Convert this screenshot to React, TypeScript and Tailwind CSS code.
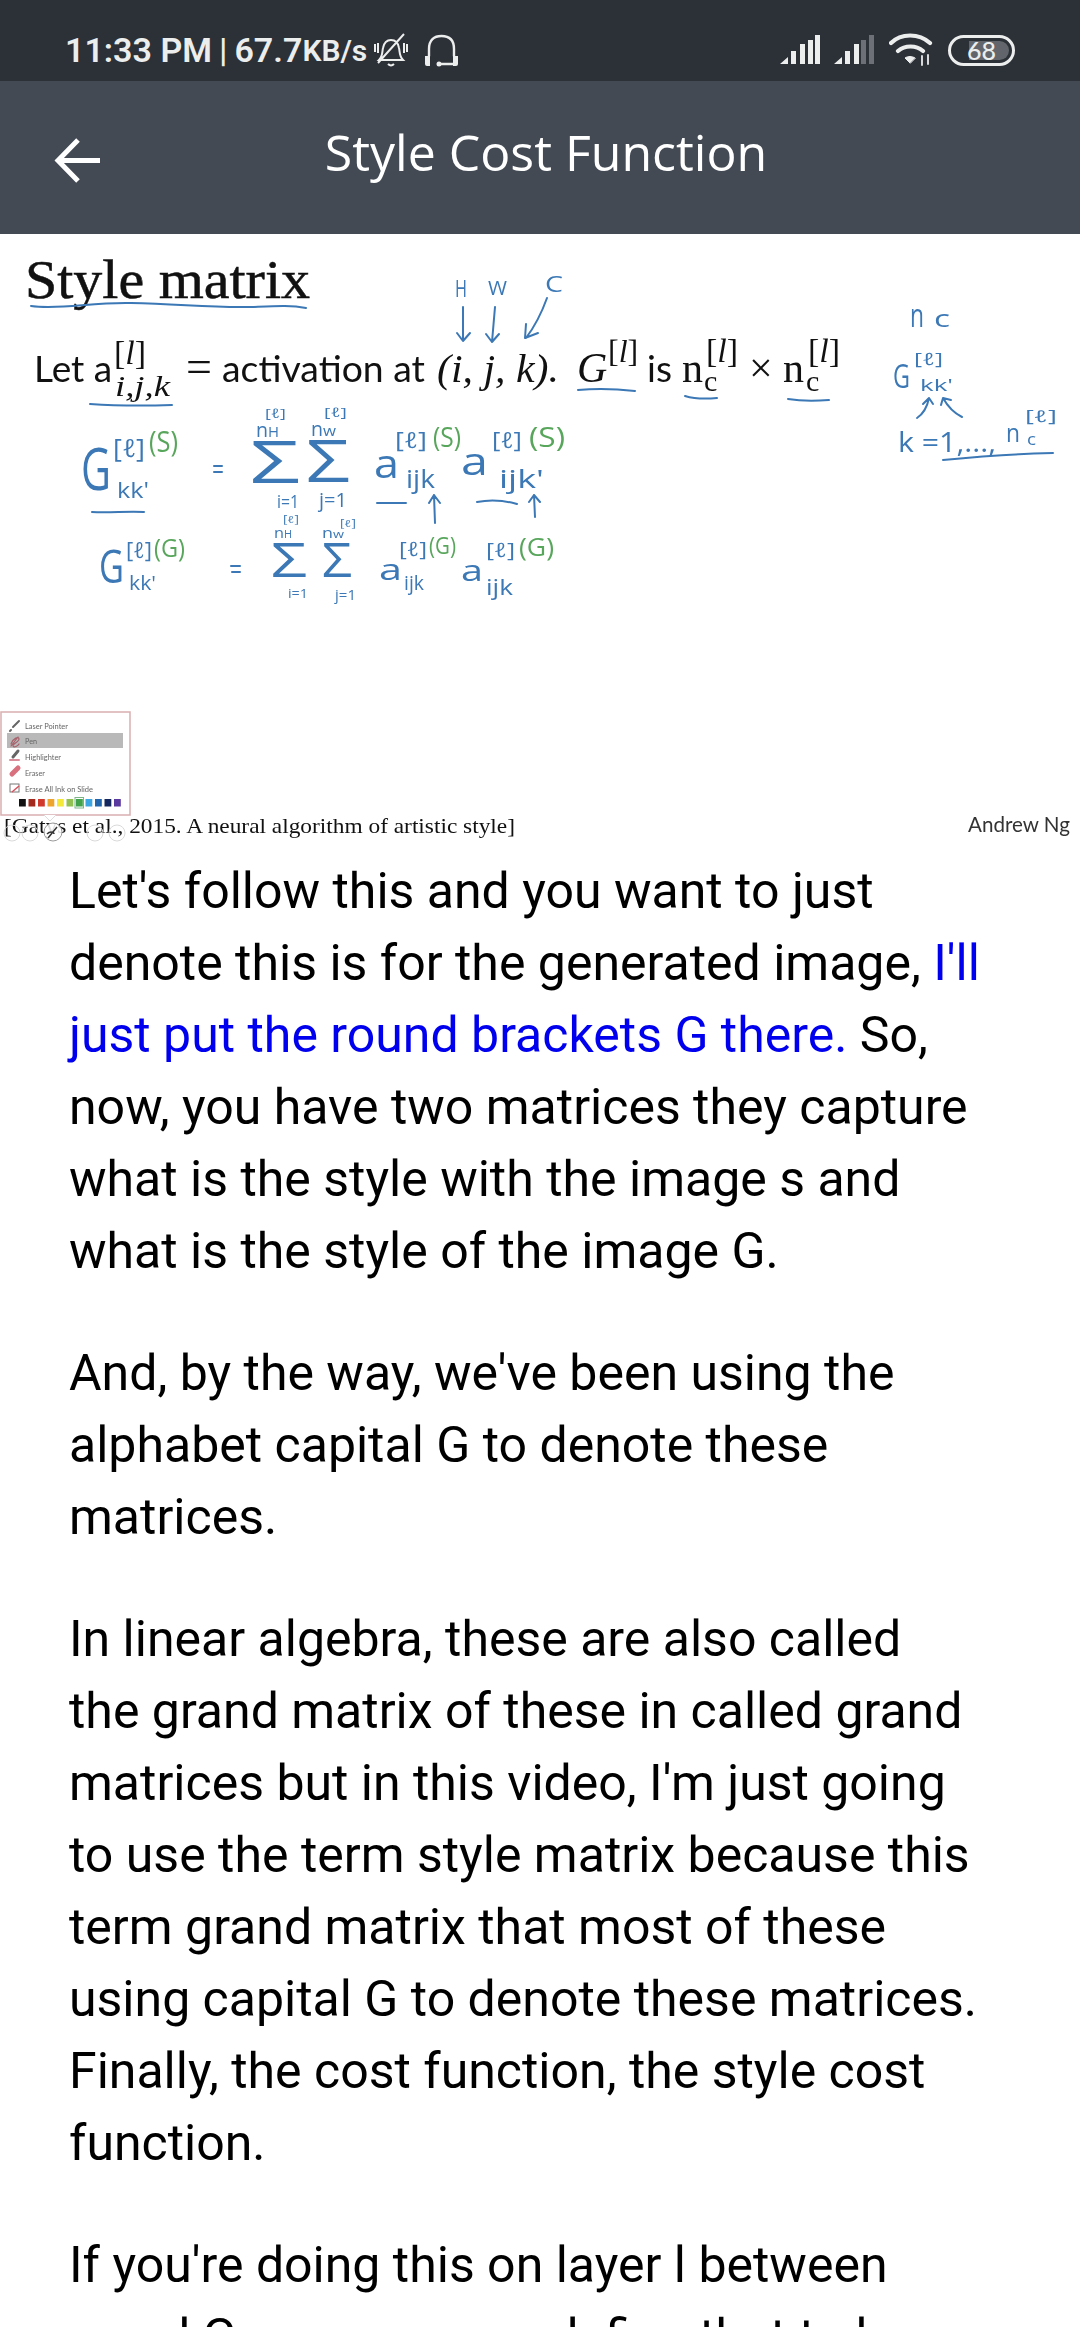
const INK = "#3b78b5";
const GREEN = "#58a65c";
const MATH = '"Liberation Serif", "DejaVu Serif", serif';
const SANS = 'Lato, "Open Sans", sans-serif';
const HAND = '"Open Sans", "DejaVu Sans", sans-serif';

// x, baseline, label, font size, width on the slide, colour
const notes: [number, number, string, number, number, string?][] = [
  [455, 297, "H", 23, 12],
  [488, 295, "W", 20, 19],
  [545, 292, "C", 21, 18],
  // first row
  [81, 490, "G", 58, 30],
  [113, 457, "[ℓ]", 25, 32],
  [149, 452, "(S)", 29, 29, GREEN],
  [117, 498, "kk'", 22, 32],
  [256, 437, "n", 20, 12],
  [268, 437, "H", 14, 11],
  [265, 418, "[ℓ]", 13, 21],
  [250, 483, "Σ", 58, 50],
  [311, 436, "n", 20, 12],
  [323, 436, "w", 15, 13],
  [324, 417, "[ℓ]", 13, 23],
  [306, 482, "Σ", 58, 44],
  [374, 478, "a", 40, 25],
  [395, 448, "[ℓ]", 22, 32],
  [433, 447, "(S)", 27, 28, GREEN],
  [406, 488, "ijk", 26, 29],
  [461, 475, "a", 38, 27],
  [492, 448, "[ℓ]", 22, 30],
  [529, 447, "(S)", 28, 36, GREEN],
  [499, 488, "ijk'", 26, 45],
  [277, 508, "i=1", 18, 22],
  [319, 507, "j=1", 20, 28],
  // second row
  [99, 583, "G", 45, 25],
  [126, 558, "[ℓ]", 22, 26],
  [154, 557, "(G)", 25, 31, GREEN],
  [129, 590, "kk'", 20, 27],
  [274, 538, "n", 15, 10],
  [284, 538, "H", 10, 8],
  [283, 523, "[ℓ]", 10, 16],
  [271, 577, "Σ", 48, 36],
  [322, 538, "n", 15, 11],
  [333, 538, "w", 11, 11],
  [340, 527, "[ℓ]", 10, 16],
  [322, 577, "Σ", 48, 30],
  [288, 598, "i=1", 13, 20],
  [335, 600, "j=1", 15, 21],
  [379, 580, "a", 29, 23],
  [404, 590, "ijk", 20, 20],
  [399, 556, "[ℓ]", 20, 28],
  [429, 554, "(G)", 23, 27, GREEN],
  [461, 581, "a", 30, 22],
  [486, 595, "ijk", 22, 27],
  [486, 557, "[ℓ]", 20, 29],
  [519, 556, "(G)", 25, 35, GREEN],
  // right column
  [910, 327, "n", 32, 14],
  [934, 327, "c", 24, 16],
  [893, 388, "G", 32, 17],
  [914, 365, "[ℓ]", 17, 29],
  [920, 391, "kk'", 17, 33],
  [898, 452, "k =1,...,", 27, 98],
  [1006, 442, "n", 26, 14],
  [1027, 445, "c", 17, 9],
  [1025, 422, "[ℓ]", 16, 32],
];

const strokes = [
  "M31 306c30 4 60-4 100-3 50 1 80 5 120 4 25-1 40-2 55 1",
  "M90 404c30 2 50 2 82 1",
  "M578 390c20-2 40-1 57 1",
  "M685 396c10 3 22 3 32 2",
  "M788 399c12 2 28 2 41 1",
  "M943 460c30-3 60-6 110-7",
  "M463 307v33M457 333l6 8 7-8",
  "M495 307l-3 35M486 334l6 8 7-8",
  "M547 298c-5 14-12 28-21 40M526 324l-1 14 13-5",
  "M92 512c18 1 35-1 52 0",
  "M377 503h29M477 502c14-3 26-2 40 2",
  "M435 523l-1-28M429 503l5-8 6 8M535 517l-1-22M529 502l5-7 6 7",
  "M214 466h8M214 472h8M231 566h9M232 572h8",
  "M917 418c6-4 10-10 12-20M923 404l6-6 4 6M962 417c-8-4-14-10-19-19M941 405l2-7 8 2",
];

const swatches = ["#ffffff", "#111111", "#a32a1d", "#d0392b", "#eea530", "#f4e838", "#93c052", "#42a24c", "#3ca6e2", "#2265ad", "#14285f", "#5a3a9e"];
const toolRows: [number, string, number][] = [
  [726, "Laser Pointer", 43],
  [741, "Pen", 12],
  [757, "Highlighter", 36],
  [773, "Eraser", 20],
  [789, "Erase All Ink on Slide", 68],
];

function StatusIcons() {
  return (
    <div className="flex items-center">
      <svg width="40" height="30" viewBox="0 0 40 30" className="mr-[14px]" fill="#eceded">
        <path d="M0 29l8-7v7zM11 16h5v13h-5zM20 9h5v20h-5zM28 5h5v24h-5zM35 0h5v29h-5z" />
      </svg>
      <svg width="40" height="30" viewBox="0 0 40 30" className="mr-[15px]">
        <path d="M0 29l8-7v7zM11 16h5v13h-5zM20 9h5v20h-5z" fill="#eceded" />
        <path d="M27 5h5v24h-5zM35 0h5v29h-5z" fill="#6d7076" />
      </svg>
      <svg width="46" height="34" viewBox="0 0 46 34" fill="none" stroke="#eceded" strokeWidth="4.2" strokeLinecap="round" className="mr-[13px]">
        <path d="M2 10C12 0 30 0 41 10M9 18c7-6 18-6 25 0" />
        <path d="M21 30l-5-5c3-2 7-2 10 0z" fill="#eceded" strokeWidth="1" />
        <path d="M33 23v9M39 22v9" strokeWidth="1.8" />
      </svg>
      <div className="relative flex h-[31px] w-[67px] items-center justify-center rounded-full border-[3px] border-[#eceded]">
        <div className="absolute top-[3px] right-[3px] bottom-[3px] left-[18px] rounded-r-full bg-[#62666c]" />
        <span className="relative text-[25px] leading-none font-medium text-[#eceded] [font-family:Lato,sans-serif]">68</span>
      </div>
    </div>
  );
}

function PenMenu() {
  return (
    <g>
      <rect x="1" y="712" width="129" height="103" fill="#fff" stroke="#d9aeb0" strokeWidth="1.5" />
      <path d="M44 815l6 6 6-6" fill="#fff" stroke="#ddd" />
      <rect x="7" y="733" width="116" height="15" fill="#b9b9b9" />
      {toolRows.map(([y, label, width]) => (
        <text key={label} x="25" y={y + 3} fontFamily={SANS} fontSize="7.5" fill="#666" textLength={width} lengthAdjust="spacingAndGlyphs">
          {label}
        </text>
      ))}
      <g fill="none" strokeLinecap="round">
        <path d="M13 727l6-6M10 731l1-1" stroke="#666" strokeWidth="2" />
        <path d="M11 744c2-6 8-8 8-5s-7 5-6 7 5 0 6-2M11 746l7-9" stroke="#a8606a" strokeWidth="1.2" />
        <path d="M13 757l5-6" stroke="#666" strokeWidth="3" />
        <path d="M10 760h9" stroke="#d98c9a" strokeWidth="2" />
        <path d="M12 774l6-6" stroke="#d8707e" strokeWidth="5" />
      </g>
      <rect x="10" y="784" width="9" height="8" fill="#fff" stroke="#777" />
      <path d="M12 792l7-6" stroke="#d8505e" strokeWidth="1.5" />
      {swatches.map((c, i) => (
        <rect key={c} x={9.5 + i * 9.5} y="799" width="6.8" height="7.5" fill={c} />
      ))}
      <rect x="75" y="797.5" width="8.5" height="10.5" fill="none" stroke="#7fb487" />
    </g>
  );
}

function Slide() {
  return (
    <svg width="1080" height="610" viewBox="0 234 1080 610" className="block blur-[0.4px]">
      <g fill="#111">
        <text x="25" y="298" fontFamily={MATH} fontSize="54" stroke="#111" strokeWidth="0.5" textLength="285" lengthAdjust="spacingAndGlyphs">Style matrix</text>
        <g fontFamily={SANS} fontSize="37">
          <text x="34" y="382">Let a</text>
          <text x="222" y="382" textLength="203" lengthAdjust="spacingAndGlyphs">activation at</text>
          <text x="647" y="382">is</text>
        </g>
        <g fontFamily={MATH}>
          <text x="186" y="382" fontSize="46">=</text>
          <text x="114" y="364" fontSize="34">[<tspan fontStyle="italic">l</tspan>]</text>
          <text x="115" y="396" fontSize="30" fontStyle="italic" textLength="55" lengthAdjust="spacingAndGlyphs">i,j,k</text>
          <text x="437" y="382" fontSize="40" fontStyle="italic" textLength="122" lengthAdjust="spacingAndGlyphs">(i, j, k).</text>
          <text x="577" y="382" fontSize="42" fontStyle="italic">G</text>
          <text x="608" y="362" fontSize="32">[<tspan fontStyle="italic">l</tspan>]</text>
          <text x="682" y="382" fontSize="42">n</text>
          <text x="704" y="391" fontSize="30">c</text>
          <text x="706" y="362" fontSize="34">[<tspan fontStyle="italic">l</tspan>]</text>
          <text x="749" y="382" fontSize="42">×</text>
          <text x="783" y="382" fontSize="42">n</text>
          <text x="806" y="391" fontSize="30">c</text>
          <text x="808" y="362" fontSize="34">[<tspan fontStyle="italic">l</tspan>]</text>
        </g>
        <text x="4" y="833" fontFamily={MATH} fontSize="21" textLength="511" lengthAdjust="spacingAndGlyphs">[Gatys et al., 2015. A neural algorithm of artistic style]</text>
        <text x="968" y="832" fontFamily={SANS} fontSize="21" fill="#333" textLength="102" lengthAdjust="spacingAndGlyphs">Andrew Ng</text>
      </g>

      <g fontFamily={HAND}>
        {notes.map(([x, y, label, size, width, color], i) => (
          <text key={i} x={x} y={y} fontSize={size} fill={color ?? INK} textLength={width} lengthAdjust="spacingAndGlyphs">
            {label}
          </text>
        ))}
      </g>
      <g fill="none" stroke={INK} strokeWidth="2" strokeLinecap="round" strokeLinejoin="round">
        {strokes.map((d, i) => (
          <path key={i} d={d} />
        ))}
      </g>

      <PenMenu />
      <g fill="none" stroke="#d9d9d9" strokeWidth="1">
        <circle cx="12" cy="833" r="8" />
        <circle cx="30" cy="833" r="8" />
        <circle cx="95" cy="833" r="8" />
        <circle cx="117" cy="833" r="8" />
      </g>
      <circle cx="53" cy="832" r="9" fill="#fff" fillOpacity="0.85" stroke="#999" />
      <path d="M48 838l9-11M47 834c3-3 7-2 7 0" fill="none" stroke="#333" strokeWidth="1.5" />
    </svg>
  );
}

export default function App() {
  return (
    <div className="h-[2340px] w-[1080px] overflow-hidden bg-white [font-family:Roboto,sans-serif]">
      <div className="flex h-[81px] items-center justify-between bg-[#2c3037] px-[65px] pt-[19px]">
        <div className="flex items-center text-[34px] font-semibold text-[#eceded]">
          <span>11:33 PM</span>
          <span className="ml-[7px] font-medium">|</span>
          <span className="ml-[7px]">67.7</span>
          <span className="text-[30px]">KB/s</span>
          <svg width="36" height="36" viewBox="2 0 32 36" fill="none" stroke="#eceded" strokeWidth="2" className="ml-[6px]">
            <path d="M6 28h24c-4-4-3-8-4-12-1-6-4-8-8-8s-7 3-8 8c-1 4 0 8-4 12zM15 32c2 2 4 2 6 0M5 31L31 2M2 12v8M5 11v10M31 11v10M34 12v8" />
          </svg>
          <svg width="35" height="33" viewBox="0 0 35 33" fill="none" stroke="#eceded" strokeWidth="2.4" className="ml-[15px]" strokeLinecap="round">
            <path d="M5 22V15C5 6 10 2 17.5 2S30 6 30 15v7M16 30h14" />
            <path d="M1 22h5v10H3a2 2 0 0 1-2-2zM29 22h5v8a2 2 0 0 1-2 2h-3z" fill="#eceded" strokeWidth="0" />
            <circle cx="15" cy="30" r="2.5" fill="#eceded" strokeWidth="0" />
          </svg>
        </div>
        <StatusIcons />
      </div>

      <header className="relative flex h-[153px] items-center justify-center bg-[#434a54] pb-[10px]">
        <svg width="46" height="45" viewBox="0 0 46 45" fill="none" stroke="#fff" strokeWidth="5" className="absolute top-[57px] left-[54px]">
          <path d="M46 22.5H4M24 2L4 22.5 24 43" />
        </svg>
        <h1 className="pl-[12px] text-[50px] font-normal text-white [font-family:'Open_Sans',sans-serif]">Style Cost Function</h1>
      </header>

      <Slide />

      <article className="h-[1483px] overflow-hidden pt-[11px] pr-[98px] pl-[69px] text-[50px] leading-[72px] text-black">
        <p className="mb-[50px]">
          Let's follow this and you want to just denote this is for the generated image,{" "}
          <span className="text-[#0000ee]">I'll just put the round brackets G there.</span> So, now, you have two matrices they capture what is the style with the image s and what is the style of the image G.
        </p>
        <p className="mb-[50px]">And, by the way, we've been using the alphabet capital G to denote these matrices.</p>
        <p className="mb-[50px]">
          In linear algebra, these are also called the grand matrix of these in called grand matrices but in this video, I'm just going to use the term style matrix because this term grand matrix that most of these using capital G to denote these matrices. Finally, the cost function, the style cost function.
        </p>
        <p>
          If you're doing this on layer l between
          <br />s and G, you can now define that to be
        </p>
      </article>
    </div>
  );
}
